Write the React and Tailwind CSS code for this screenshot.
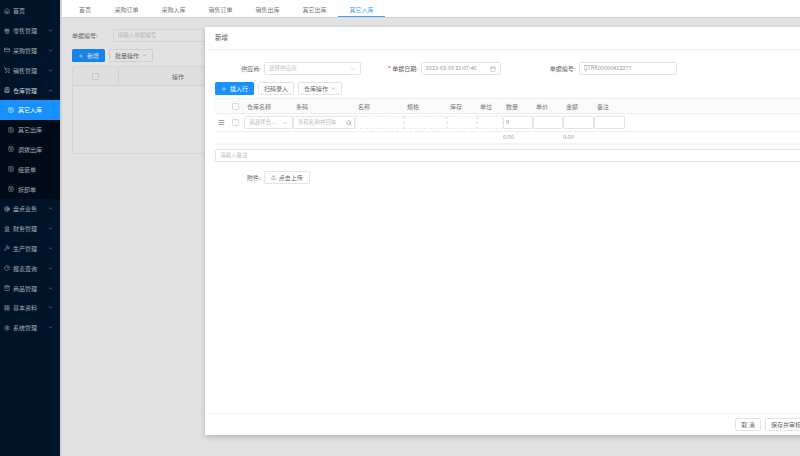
import {
  Home, Gift, CreditCard, ShoppingCart, BookText, SquareChartGantt, Target, Landmark, Hammer, ChartPie, ShoppingBag, LayoutGrid, Settings,
  ChevronDown, ChevronUp, Plus, Search, Calendar, Upload, Menu,
} from 'lucide-react'

const menuTop = [
  { icon: Home, label: '首页' },
  { icon: Gift, label: '零售管理', arrow: true },
  { icon: CreditCard, label: '采购管理', arrow: true },
  { icon: ShoppingCart, label: '销售管理', arrow: true },
]
const subMenu = ['其它入库', '其它出库', '调拨出库', '组装单', '拆卸单']
const menuBottom = [
  { icon: Target, label: '盘点业务' },
  { icon: Landmark, label: '财务管理' },
  { icon: Hammer, label: '生产管理' },
  { icon: ChartPie, label: '报表查询' },
  { icon: ShoppingBag, label: '商品管理' },
  { icon: LayoutGrid, label: '基本资料' },
  { icon: Settings, label: '系统管理' },
]
const tabs = ['采购订单', '采购入库', '销售订单', '销售出库', '其它出库', '其它入库']
const gridCols = 'grid grid-cols-[29px_49px_62px_49px_43px_30px_26px_30px_30px_31px_31px_1fr]'

function MenuItem({ icon: Icon, label, arrow = true }) {
  return (
    <div className="h-[19.8px] flex items-center pl-[4px] pr-[7px] text-[#a7adb4]">
      <Icon size={6} strokeWidth={2} />
      <span className="ml-[3px]">{label}</span>
      {arrow && <ChevronDown size={5} className="ml-auto" />}
    </div>
  )
}

function Sidebar() {
  return (
    <div className="w-[60px] shrink-0 bg-[#001429] text-[6px] pt-[1px]">
      {menuTop.map((m) => <MenuItem key={m.label} {...m} arrow={!!m.arrow} />)}
      <div className="h-[19.8px] flex items-center pl-[4px] pr-[7px] text-[#d5d8db]">
        <BookText size={6} />
        <span className="ml-[3px]">仓库管理</span>
        <ChevronUp size={5} className="ml-auto" />
      </div>
      <div className="bg-[#000b16]">
        {subMenu.map((s, i) => (
          <div key={s} className={`h-[19.8px] flex items-center pl-[8px] ${i === 0 ? 'bg-[#1890ff] text-white' : 'text-[#a7adb4]'}`}>
            <SquareChartGantt size={6} />
            <span className="ml-[4px]">{s}</span>
          </div>
        ))}
      </div>
      {menuBottom.map((m) => <MenuItem key={m.label} {...m} />)}
    </div>
  )
}

function Input({ className = '', text, children }) {
  return (
    <div className={`h-[13px] bg-white border border-[#e4e4e4] rounded-[1.5px] flex items-center px-[4px] text-[5.5px] text-[#bdbdbd] ${className}`}>
      <span className="truncate">{text}</span>
      {children}
    </div>
  )
}

function Btn({ className = '', children }) {
  return (
    <div className={`h-[13px] flex items-center justify-center gap-[3px] bg-white border border-[#e4e4e4] rounded-[1.5px] text-[6px] text-[#666] ${className}`}>
      {children}
    </div>
  )
}

function Background() {
  return (
    <div className="flex-1 flex flex-col bg-[#e2e2e2] border-l-2 border-[#d2d2d2]">
      <div className="h-[18px] bg-white border-b border-[#d4d4d4] flex pl-[5px] pt-[2px] text-[6px] text-[#777]">
        <div className="w-[36px] flex items-center justify-center">首页</div>
        {tabs.map((t, i) => (
          <div key={t} className={`w-[47px] flex items-center justify-center ${i === 5 ? 'text-[#45a3f5] border-b border-[#45a3f5]' : ''}`}>
            {t}
          </div>
        ))}
      </div>
      <div className="pl-[10px] pt-[11px] text-[6px] text-[#666]">
        <div className="flex items-center gap-[15px]">
          <span>单据编号:</span>
          <div className="h-[13px] flex-1 border border-[#d4d4d4] rounded-[1.5px] flex items-center px-[4px] text-[5.5px] text-[#b4b4b4]">请输入单据编号</div>
        </div>
        <div className="flex gap-[4px] mt-[7px]">
          <div className="w-[33px] h-[13px] bg-[#1684e6] rounded-[1.5px] text-[#e2e2e2] flex items-center justify-center gap-[3px]">
            <Plus size={6} /> 新增
          </div>
          <div className="w-[44px] h-[13px] border border-[#d0d0d0] rounded-[1.5px] flex items-center justify-center gap-[3px]">
            批量操作 <ChevronDown size={5} />
          </div>
        </div>
        <div className="mt-[4px] h-[88px] border border-[#d6d6d6] rounded-[1.5px]">
          <div className="h-[19px] flex bg-[#dfdfdf] border-b border-[#d2d2d2]">
            <div className="w-[46px] border-r border-[#d2d2d2] flex items-center justify-center">
              <div className="w-[7px] h-[7px] border border-[#c8c8c8] rounded-[1px]" />
            </div>
            <div className="w-[118px] flex items-center justify-center">操作</div>
          </div>
        </div>
      </div>
    </div>
  )
}

function ItemTable() {
  const heads = ['', '仓库名称', '条码', '名称', '规格', '库存', '单位', '数量', '单价', '金额', '备注', '']
  return (
    <div className="mt-[3px] border-t border-[#efefef] text-[6px] text-[#777]">
      <div className={`${gridCols} h-[15px] bg-[#fafafa] border-b border-[#efefef] items-center`}>
        {heads.map((h, i) => (
          <div key={i} className={i === 0 ? 'flex justify-end pr-[5px]' : 'pl-[3px]'}>
            {i === 0 ? <div className="w-[7px] h-[7px] bg-white border border-[#dcdcdc] rounded-[1px]" /> : h}
          </div>
        ))}
      </div>
      <div className={`${gridCols} h-[18px] border-b border-[#efefef] items-center`}>
        <div className="flex items-center justify-between pl-[3px] pr-[5px]">
          <Menu size={7} className="text-[#555]" />
          <div className="w-[7px] h-[7px] border border-[#dcdcdc] rounded-[1px]" />
        </div>
        <Input text="请选择仓..." className="justify-between">
          <ChevronDown size={6} className="shrink-0 text-[#b0b0b0]" />
        </Input>
        <Input text="条码名称并回车" className="justify-between !pr-[2px]">
          <Search size={6} className="shrink-0 text-[#888]" />
        </Input>
        {[0, 1, 2, 3].map((c) => (
          <div key={c} className="h-[13px] border border-dashed border-[#ececec]" />
        ))}
        <Input text="0" className="!text-[#888] !px-[2px]" />
        <Input />
        <Input />
        <Input />
      </div>
      <div className={`${gridCols} h-[13px] bg-white border-b-2 border-[#f4f4f4] items-center text-[5.5px] text-[#999]`}>
        <div className="col-start-8">0.00</div>
        <div className="col-start-10">0.00</div>
      </div>
    </div>
  )
}

function Modal() {
  return (
    <div className="absolute left-[205px] top-[27px] w-[700px] h-[408px] bg-white flex flex-col shadow-[0_2px_6px_rgba(0,0,0,0.2)] text-[6px] text-[#666]">
      <div className="h-[23px] border-b border-[#f0f0f0] flex items-center pl-[10px] text-[6.5px] text-[#555] shrink-0">新增</div>
      <div className="flex-1 px-[10px] pt-[12px]">
        <div className="flex items-center">
          <span className="w-[46px] text-right">供应商:</span>
          <Input text="选择供应商" className="w-[97px] ml-[3px] justify-between">
            <ChevronDown size={6} className="text-[#b0b0b0]" />
          </Input>
          <span className="ml-[27px]"><span className="text-[#f5222d]">*</span> 单据日期:</span>
          <Input text="2023-03-09 21:07:46" className="w-[80px] ml-[3px] justify-between !text-[#999]">
            <Calendar size={6} className="text-[#b0b0b0]" />
          </Input>
          <span className="ml-[49px]">单据编号:</span>
          <Input text="QTRK00000412277" className="w-[98px] ml-[3px] !text-[#999]" />
        </div>
        <div className="flex gap-[4px] mt-[7px]">
          <div className="w-[39px] h-[13px] bg-[#1890ff] rounded-[1.5px] text-white flex items-center justify-center gap-[3px]">
            <Plus size={6} /> 插入行
          </div>
          <Btn className="w-[36px]">扫码录入</Btn>
          <Btn className="w-[44px]">仓库操作 <ChevronDown size={5} /></Btn>
        </div>
        <ItemTable />
        <Input text="请输入备注" className="mt-[4px] w-full" />
        <div className="flex items-center mt-[9px] ml-[32px]">
          <span>附件:</span>
          <Btn className="w-[46px] ml-[3px]"><Upload size={5} /> 点击上传</Btn>
        </div>
      </div>
      <div className="h-[22px] shrink-0 border-t border-[#f0f0f0] flex items-center gap-[4px] pl-[530px]">
        <Btn className="w-[26px]">取 消</Btn>
        <Btn className="w-[42px]">保存并审核</Btn>
      </div>
    </div>
  )
}

export default function App() {
  return (
    <div className="relative flex w-[800px] h-[456px] overflow-hidden bg-[#e2e2e2]" style={{ fontFamily: '"Noto Sans CJK SC", "Liberation Sans", sans-serif' }}>
      <Sidebar />
      <Background />
      <Modal />
    </div>
  )
}
